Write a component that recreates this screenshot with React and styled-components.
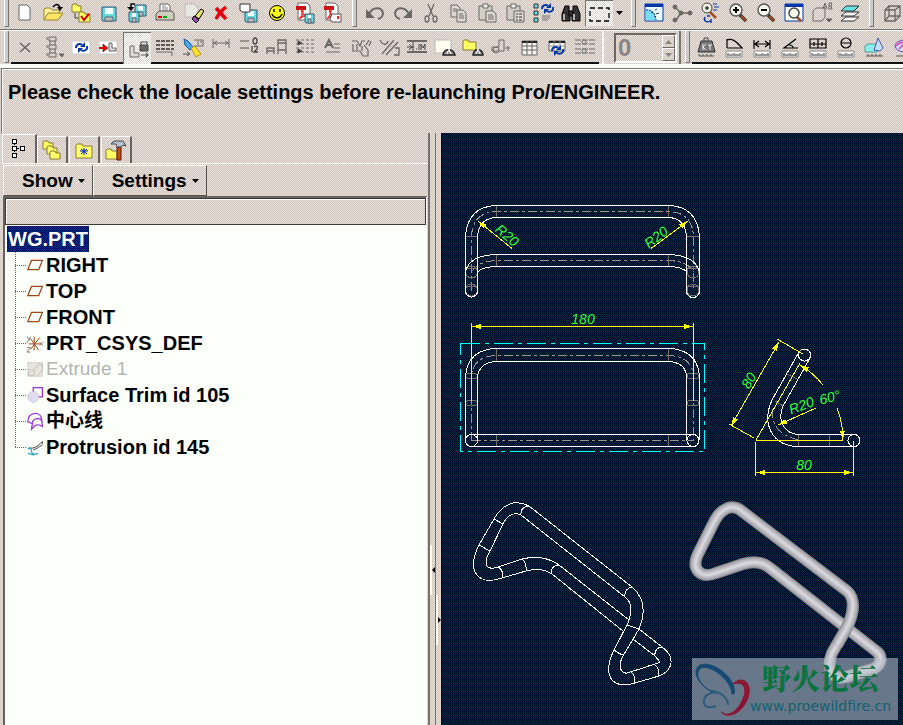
import React from "react";
import styled, { createGlobalStyle, css } from "styled-components";

const weave = css`
  background-color: #d3cdca;
  background-image: repeating-conic-gradient(rgba(150, 150, 155, 0.2) 0 25%, rgba(255, 248, 232, 0.42) 0 50%),
    repeating-conic-gradient(rgba(255, 255, 200, 0.2) 0 25%, rgba(240, 190, 205, 0.26) 0 50%);
  background-size: 2px 2px, 4px 4px;
`;

const lightWeave = css`
  background: repeating-conic-gradient(#ffffff 0 25%, #d8d8d0 0 50%) 0 0 / 2px 2px;
`;

const GlobalStyle = createGlobalStyle`
  * { box-sizing: border-box; }
  body { margin: 0; overflow: hidden; }
  button, input { font: inherit; color: inherit; padding: 0; border: 0; background: none; border-radius: 0; }
  svg { display: block; flex: none; }
`;

const Page = styled.div`
  ${weave}
  display: flex;
  flex-direction: column;
  min-height: 100vh;
  font: bold 19px/26px "Liberation Sans", "Noto Sans CJK SC", sans-serif;
  color: #000;
`;

const Bar = styled.div`
  display: flex;
  align-items: flex-start;
  overflow: hidden;
  height: ${(p) => (p.$tall ? 38 : 30)}px;
  border-bottom: ${(p) => (p.$tall ? "4px solid #fcfffa" : "1px solid #77736f")};
  border-top: ${(p) => (p.$tall ? "1px solid #fff" : 0)};
`;

const Grip = styled.span`
  flex: none;
  width: ${(p) => p.$width || 14}px;
  height: ${(p) => (p.$tall ? 31 : 26)}px;
  padding-left: ${(p) => (p.$width === 11 ? 4 : 5)}px;

  &::before {
    content: "";
    display: block;
    width: 3px;
    height: 100%;
    background: #ccc;
    border-left: 1px solid #fff;
    border-right: 1px solid #77736f;
    border-bottom: 1px solid #77736f;
  }
`;

const Strip = styled.div`
  display: flex;
  flex: none;
  height: ${(p) => (p.$tall ? 33 : 26)}px;
  padding-top: ${(p) => (p.$tall ? 1 : 0)}px;
  border-bottom: ${(p) => (p.$tall ? "2px solid #111" : 0)};
`;

const ToolButton = styled.button`
  display: flex;
  align-items: center;
  justify-content: center;
  flex: none;
  width: 28px;
  height: ${(p) => (p.$pressed && p.$tall ? 32 : p.$tall ? 30 : 26)}px;
  ${(p) =>
    p.$pressed &&
    css`
      ${lightWeave}
      border-left: 1px solid #77736f;
      border-top: 1px solid #77736f;
    `}
`;

const DropButton = styled.button`
  width: 13px;
  display: grid;
  place-items: center;
`;

const ValueGroup = styled.div`
  flex: none;
  width: 79px;
  height: 34px;
  margin-left: 3px;
  padding: 2px 4px 0 10px;
  display: flex;
  border-left: 2px solid #fff;
  border-right: 2px solid #77736f;
  border-bottom: 1px solid #77736f;
`;

const Spinner = styled.div`
  display: flex;
  width: 63px;
  height: 30px;
  border: 2px solid #6b6864;
  border-right-color: #fff;
  border-bottom-color: #fff;
`;

const ValueInput = styled.input`
  width: 48px;
  min-width: 0;
  padding-left: 2px;
  font-size: 24px;
  color: #888580;
`;

const Steps = styled.div`
  display: flex;
  flex-direction: column;
  width: 13px;
`;

const Step = styled.button`
  flex: 1;
  display: grid;
  place-items: center;
  fill: #888580;
  border-top: 1px solid #fff;
  border-left: 1px solid #fff;
  border-bottom: 1px solid #6b6864;
  border-right: 1px solid #6b6864;
`;

const Message = styled.p`
  flex: none;
  height: 65px;
  margin: 0 0 0 1px;
  padding: 10px 6px;
  border-top: 1px solid #77736f;
  border-left: 1px solid #77736f;
  box-shadow: inset 1px 1px #fff;
  font-size: 20px;
  white-space: nowrap;
`;

const Main = styled.main`
  flex: 1;
  display: flex;
`;

const Side = styled.aside`
  flex: none;
  width: 430px;
  display: flex;
  flex-direction: column;
  padding: 1px 0 0 2px;
  border-right: 2px solid #77736f;
`;

const Tabs = styled.div`
  display: flex;
  align-items: flex-end;
  height: 29px;
`;

const Tab = styled.button`
  width: ${(p) => (p.$active ? 35 : 31)}px;
  height: ${(p) => (p.$active ? 29 : 27)}px;
  margin-right: ${(p) => (p.$active ? 0 : 1)}px;
  display: grid;
  place-items: center;
  border-top: 1px solid #fff;
  border-left: 1px solid #fff;
  border-right: 2px solid #66625e;
`;

const Menus = styled.div`
  display: flex;
  height: 33px;
  border-top: 1px solid #fff;
  padding: 1px 0 0 1px;
`;

const MenuButton = styled.button`
  display: flex;
  align-items: center;
  gap: 5px;
  height: 31px;
  padding: 0 7px 0 18px;
  border: 1px solid #fff;
  border-right: 1px solid #55514d;
  border-bottom: 1px solid #55514d;
`;

const TreePanel = styled.div`
  flex: 1;
  margin: 0 1px;
  background: #fcfffa;
  border-top: 2px solid #66625e;
  border-left: 2px solid #66625e;
  border-right: 1px solid #fff;
  font-size: 20px;
`;

const ColumnHead = styled.div`
  ${weave}
  height: 27px;
  border: 1px solid #3d3a38;
  box-shadow: inset 1px 1px #fff;
`;

const Root = styled.button`
  display: block;
  margin: 1px 0 0 2px;
  padding: 0 1px;
  height: 26px;
  color: #fff;
  background: repeating-conic-gradient(#000066 0 25%, #003380 0 50%) 0 0 / 2px 2px;
`;

const Tree = styled.ul`
  list-style: none;
  margin: 0 0 0 10px;
  padding: 0;
`;

const Node = styled.li`
  display: flex;
  height: 26px;
  background: repeating-linear-gradient(#666 0 1px, transparent 1px 2px) 0 0 / 1px ${(p) => (p.$last ? "50%" : "100%")} no-repeat;

  &::before {
    content: "";
    width: 11px;
    height: 13px;
    border-bottom: 1px dotted #666;
  }
`;

const NodeButton = styled.button`
  display: flex;
  align-items: center;
  white-space: nowrap;
  color: ${(p) => (p.$dim ? "#b4b4b2" : "#000")};
  font-weight: ${(p) => (p.$dim ? "normal" : "bold")};
  font-size: ${(p) => (p.$dim || p.$cjk ? 19 : 20)}px;
`;

const Sash = styled.div`
  flex: none;
  width: 11px;
  display: flex;
`;

const Track = styled.div`
  flex: none;
  width: ${(p) => (p.$line ? 6 : 5)}px;
  padding-top: ${(p) => p.$top}px;
  border-right: ${(p) => (p.$line ? "1px solid #77736f" : 0)};
`;

const Handle = styled.button`
  display: grid;
  place-items: center;
  width: 5px;
  height: 50px;
  border-left: 2px solid #fffbe8;
`;

const Canvas = styled.section`
  flex: 1;
  min-width: 0;
  position: relative;
  background: repeating-conic-gradient(#000033 0 25%, #002c33 0 50%) 0 0 / 2px 2px;
`;

const Drawing = styled.svg`
  width: 100%;
  height: 100%;
  text {
    font: italic 14px "Liberation Sans", sans-serif;
    fill: #33ff33;
    text-anchor: middle;
  }
`;

const Watermark = styled.a`
  position: absolute;
  right: 5px;
  bottom: 5px;
  width: 206px;
  height: 62px;
  display: flex;
  background: rgba(190, 198, 208, 0.55);
  text-decoration: none;
`;

const MarkText = styled.span`
  display: flex;
  flex-direction: column;
`;

const MarkTitle = styled.span`
  padding: 2px 0 0 12px;
  font: 900 29px/36px "Noto Serif CJK SC", "Noto Sans CJK SC", serif;
  color: #0b7340;
`;

const MarkUrl = styled.span`
  font: 14px/20px "DejaVu Sans", sans-serif;
  color: #14626e;
`;

const folder = (x, y, w, h) => (
  <path d={`M${x} ${y + h}v-${h}l1-1h4l1 2h${w - 6}v${h - 1}z`} fill="#ffff66" stroke="#8a7a30" />
);
const disk = (x, y, s) => (
  <g>
    <path d={`M${x} ${y}h${s}v${s}h-${s - 1}l-1-1z`} fill="#66dddd" stroke="#357" />
    <path d={`M${x + 3} ${y + 1}h${s - 6}v${s / 2 - 1}h-${s - 6}z`} fill="#f4ffff" />
    <path d={`M${x + 3} ${y + s - 4}h${s - 6}v4h-${s - 6}z`} fill="#bbb" stroke="#567" />
  </g>
);
const page = (x, y, w, h, c = "#fff") => (
  <path d={`M${x} ${y}h${w - 3}l3 3v${h - 3}h-${w}z`} fill={c} stroke="#666" />
);
const ruler = (
  <g>
    <path d="M3 15h16v6H3z" fill="#fff" stroke="#888" />
    <path d="M5 17v3M7 18v2M9 18v2M11 17v3M13 18v2M15 18v2M17 17v3" stroke="#333" />
  </g>
);
const pdf = (
  <g>
    {page(4, 1, 12, 17)}
    <path d="M2 4h10v4H2z" fill="#c11" />
    <path d="M5 17c4-4 5-10 3-9s2 8 9 6c-5-1-9 0-12 3" fill="none" stroke="#e33" strokeWidth="1.5" />
  </g>
);
const lens = (s) => (
  <g>
    <path d="M13 13l6 6" stroke="#333" strokeWidth="3.5" />
    <path d="M14 14l5 5" stroke="#a54b20" strokeWidth="2" />
    <circle cx="9" cy="8" r="6" fill="#f6f6ee" stroke="#555" strokeWidth="1.4" />
    <path d={s} stroke="#000" strokeWidth="2" />
  </g>
);
const swirl = (x, y) => (
  <g transform={`translate(${x} ${y})`} fill="none" stroke="#0637a8" strokeWidth="2">
    <path d="M1 6c0-4 4-5 6-3M12 4c1 4-3 6-6 4" />
    <path d="M5 5h5V0zM8 6H3v5z" fill="#0637a8" stroke="none" />
  </g>
);

const G = "#6b6864";

const glyphs = {
  new: page(5, 3, 11, 15),
  open: (
    <g>
      <path d="M2 18V7l2-1h4l2 2h7v3" fill="#fff3a0" stroke="#9a8430" />
      <path d="M2 18l4-7h15l-5 7z" fill="#ffe566" stroke="#9a8430" />
      <path d="M11 5c3-4 6-3 7 1" fill="none" stroke="#000" strokeWidth="1.5" />
      <path d="M15 5h6l-3 4z" />
    </g>
  ),
  folders: (
    <g>
      {folder(2, 3, 9, 7)}
      <path d="M5 11v5h4" fill="none" stroke="#444" />
      {folder(9, 11, 11, 9)}
      <path d="M11 14l3 4 5-6" fill="none" stroke="#c00" strokeWidth="2" />
    </g>
  ),
  save: disk(4, 5, 14),
  saveAll: (
    <g>
      {disk(9, 3, 11)}
      {disk(3, 10, 10)}
      <path d="M9 2H5v5" fill="none" stroke="#000" strokeWidth="1.5" />
      <path d="M1 5h7l-3 4z" />
    </g>
  ),
  print: (
    <g>
      <path d="M6 10V2h8l2 2v6" fill="#fff" stroke="#666" />
      <path d="M8 4h4M8 6h6M8 8h6" stroke="#888" />
      <path d="M2 12l3-3h13l2 3v6H2z" fill="#cfccc0" stroke="#555" />
      <path d="M4 15h4" stroke="#c00" strokeWidth="2" />
      <path d="M9 15h4" stroke="#0a0" strokeWidth="2" />
    </g>
  ),
  erase: (
    <g>
      <path d="M3 2h9l4 4v9H3z" fill="#e8e8e2" stroke="#999" strokeDasharray="1 1" />
      <path d="M13 14l6-7 3 2-5 8z" fill="#e8e070" stroke="#000" />
      <path d="M12 14l5 4-3 3-4-4z" fill="#a050b0" stroke="#000" />
    </g>
  ),
  remove: <path d="M6 6l10 11M16 5c-5 4-8 8-10 12" stroke="#e8000c" strokeWidth="3.5" fill="none" />,
  saveCopy: (
    <g>
      {disk(7, 8, 12)}
      <path d="M2 2h10v8H4l-2-2z" fill="#fff" stroke="#333" />
    </g>
  ),
  smile: (
    <g>
      <circle cx="11" cy="11" r="7.5" fill="#ffff00" stroke="#000" />
      <path d="M8 7v3M14 7v3M6 12c2 5 8 5 10 0" fill="none" stroke="#000" strokeWidth="1.5" />
    </g>
  ),
  pdfSave: (<g>{pdf}{disk(11, 12, 9)}</g>),
  pdfMail: (
    <g>
      {pdf}
      <path d="M10 12h9v8h-9l-2-3z" fill="#fff" stroke="#555" />
      <path d="M15 14h2v3h-2z" fill="#e22" />
    </g>
  ),
  undo: (
    <g fill="none" stroke={G} strokeWidth="2">
      <path d="M5 12C9 4 18 5 19 11c0 4-2 5-5 6" />
      <path d="M2 7v9h9z" fill={G} stroke="none" />
    </g>
  ),
  redo: (
    <g fill="none" stroke={G} strokeWidth="2">
      <path d="M17 12C13 4 4 5 3 11c0 4 2 5 5 6" />
      <path d="M20 7v9h-9z" fill={G} stroke="none" />
    </g>
  ),
  cut: (
    <g fill="none" stroke={G} strokeWidth="1.3">
      <path d="M8 2l5 12M14 2L9 14" />
      <ellipse cx="7" cy="17" rx="2" ry="3" />
      <ellipse cx="15" cy="17" rx="2" ry="3" />
    </g>
  ),
  copy: (
    <g>
      {page(3, 3, 9, 12, "#ddd9d2")}
      {page(9, 8, 9, 12, "#ddd9d2")}
      <path d="M5 7h4M5 9h4M11 12h4M11 14h5M11 16h5" stroke={G} />
    </g>
  ),
  paste: (
    <g>
      <path d="M3 4h13v14H3z" fill="#d2cec6" stroke={G} />
      <path d="M7 2h5v4H7z" fill="#eee" stroke={G} />
      {page(10, 9, 10, 11, "#ddd9d2")}
      <path d="M12 13h5M12 15h6M12 17h6" stroke={G} />
    </g>
  ),
  pasteSpecial: (
    <g>
      <path d="M3 4h13v14H3z" fill="#d2cec6" stroke={G} />
      <path d="M7 2h5v4H7z" fill="#eee" stroke={G} />
      <path d="M10 9h10v11H10z" fill="#ddd9d2" stroke={G} />
      <path d="M12 12h2M15 12h3M12 15h2M15 15h3M12 18h2M15 18h3" stroke={G} strokeWidth="1.5" />
    </g>
  ),
  regen: (
    <g>
      <path d="M2 2h4v4H2zM2 9h4v4H2zM2 16h4v4H2z" fill="#66dddd" stroke="#333" />
      {swirl(9, 1)}
      <path d="M10 14h8M10 16h8M10 18h6" stroke="#777" />
    </g>
  ),
  find: (
    <g fill="#333" stroke="#000">
      <path d="M5 4h4v4l1 3v8H2v-7zM13 4h4l3 8v7h-8v-8l1-3z" />
      <path d="M9 9h4v5H9z" />
      <path d="M4 12v6M14 12v6" stroke="#ddd" strokeWidth="1.5" />
    </g>
  ),
  select: <path d="M1 5h19v13H1z" fill="none" stroke="#000" strokeWidth="1.3" strokeDasharray="5 3" />,
  repaint: (
    <g>
      <path d="M2 2h18v17H2z" fill="#eaffff" stroke="#0637a8" />
      <path d="M2 2h18v3H2z" fill="#0637a8" />
      <path d="M3 8c6-1 9 3 10 10H3z" fill="#77dcf4" />
      <path d="M8 10l2 1M12 8l2-1M13 12l3-1M11 14l2 1" stroke="#335" />
      <path d="M3 8c6-1 9 3 10 10" fill="none" stroke="#0637a8" strokeDasharray="2 1" />
    </g>
  ),
  orient: (
    <g stroke={G} fill={G}>
      <path d="M4 5l6 6h8M10 11l-5 7" strokeWidth="1.5" fill="none" />
      <circle cx="4" cy="5" r="2" />
      <circle cx="4" cy="18" r="2" />
      <circle cx="19" cy="11" r="2" />
      <circle cx="10" cy="11" r="2" />
    </g>
  ),
  spin: (
    <g>
      <path d="M11 10l6 6" stroke="#a54b20" strokeWidth="2.5" />
      <circle cx="8" cy="6" r="5" fill="#eed" stroke="#444" />
      <path d="M8 4v4M6 6h4" stroke="#000" />
      <path d="M14 2h4M15 5h5M14 8h4" stroke="#0637a8" />
      <path d="M6 15c-2 4 2 6 5 4M8 14h3M12 21v-4" stroke="#0637a8" strokeWidth="1.5" fill="none" />
    </g>
  ),
  zoomIn: lens("M6 8h6M9 5v6"),
  zoomOut: lens("M6 8h6"),
  refit: (
    <g>
      <path d="M2 2h18v17H2z" fill="#fff" stroke="#0637a8" />
      <path d="M2 2h18v3H2z" fill="#0637a8" />
      <path d="M14 15l4 4" stroke="#a54b20" strokeWidth="2.5" />
      <circle cx="11" cy="11" r="5" fill="#fffff0" stroke="#444" strokeWidth="1.5" />
    </g>
  ),
  saved: (
    <g fill="none" stroke={G}>
      <path d="M2 19V9l3-3h9v9l-3 4z" />
      <path d="M12 7l2-6 2 6M12 5h4M18 7V1h3l-1 3 1 3zM18 4h2" />
      <path d="M15 17h6l-3 3z" fill={G} />
    </g>
  ),
  layers: (
    <g fill="#fff" stroke="#333">
      <path d="M2 19l5-4h13l-5 4z" />
      <path d="M2 14l5-4h13l-5 4z" />
      <path d="M2 9l5-5h13l-5 5z" fill="#66e6e6" />
    </g>
  ),
  cube: (
    <g fill="none" stroke={G} strokeWidth="1.3">
      <path d="M4 8h10v11H4zM8 4h11v10H8zM4 8l4-4M14 8l5-4M4 19l4-5M14 19l5-5" />
    </g>
  ),
  close: <path d="M6 7l10 9M16 7L6 16" stroke={G} strokeWidth="1.6" />,
  queue: (
    <g fill="none" stroke={G}>
      <path d="M7 1h7v4H7zM7 9h7v4H7zM7 17h7v4H7zM5 1v3M5 9v3M5 17v3M8 5v4M13 5v4M8 13v4M13 13v4" />
      <path d="M17 18h5l-2 3z" fill={G} />
    </g>
  ),
  update: (
    <g>
      <path d="M2 5h18v13H2z" fill="#fff" stroke="#ccc" />
      {swirl(5, 6)}
    </g>
  ),
  insert: (
    <g>
      <path d="M1 5h18v13H1z" fill="#fff" stroke="#ccc" />
      <path d="M11 7v8h7v-3h-4V7z" fill="#ddd" stroke="#666" />
      <path d="M1 12h6" stroke="#d00" strokeWidth="2" />
      <path d="M5 8l5 4-5 4z" fill="#d00" stroke="#600" strokeWidth=".5" />
    </g>
  ),
  lock: (
    <g>
      <path d="M3 8v11h9v-4H7V8z" fill="#ddd" stroke={G} />
      <path d="M13 7h8v6h-8z" fill={G} stroke="#444" />
      <path d="M14 7V4h6v3M14 17h7M19 15l2 2-2 2" fill="none" stroke="#555" strokeWidth="1.2" />
    </g>
  ),
  dashes: (
    <g fill="none" stroke="#333" strokeDasharray="4 1">
      <path d="M2 5h18M2 9h18M2 13h18" strokeWidth="1.4" />
      <path d="M2 16h16v4" stroke={G} strokeDasharray="none" />
    </g>
  ),
  brush: (
    <g>
      <path d="M12 4h9v6h-9M15 6h2M18 6h2M15 8h2" fill="none" stroke={G} />
      <path d="M2 3l4 2 5 6-3 3-5-5z" fill="#4aa6ee" stroke="#135a9a" />
      <path d="M9 12l4-2 6 8-5 3z" fill="#ffe030" stroke="#b69210" />
      <path d="M1 18h6M5 16l3 2-3 2" stroke="#555" fill="none" />
    </g>
  ),
  width: (
    <g stroke={G} fill="none">
      <path d="M3 3v9M19 3v9M3 7h16M7 5L4 7l3 2M15 5l3 2-3 2" />
    </g>
  ),
  ordinate: (
    <g>
      <path d="M2 5h9M2 12h9" stroke="#555" />
      <ellipse cx="17" cy="5" rx="2" ry="3" fill="none" stroke="#444" strokeWidth="1.3" />
      <path d="M14 10v6M16 11c3-2 4 0 3 2l-3 3h4" fill="none" stroke="#444" strokeWidth="1.3" />
    </g>
  ),
  steps: (<path d="M1 18v-6h7v6M1 15h7M12 18V4h8v14M12 7h8M12 14h8" fill="none" stroke={G} strokeWidth="1.3" />),
  align: (
    <g stroke="#444" fill="#444">
      <path d="M2 4h18M2 8h18M2 12h18M2 16h18" stroke={G} strokeDasharray="3 2" />
      <path d="M4 5l4 2-4 2zM4 13l4 2-4 2z" />
    </g>
  ),
  text: (
    <g stroke={G} fill="none">
      <path d="M3 12l4-8 4 8M5 9h5" strokeWidth="2" />
      <path d="M12 8h6M12 12h6M4 16h14" />
    </g>
  ),
  wave: (<path d="M2 5h5l3 5 2-5h3M3 8v8M7 8v6M4 15h6l3 5h5v-6l-4-5M16 9l3-5M19 10l2-5M12 10v5" fill="none" stroke={G} strokeWidth="1.2" />),
  slope: (<path d="M2 4c3 6 7 5 8 1M4 18L16 4M8 19L20 6M16 19h5v-7h-4" fill="none" stroke={G} strokeWidth="1.3" />),
  scale: (
    <g stroke="#444" fill="none">
      <path d="M1 5h20M1 16h20" strokeWidth="1.4" />
      <path d="M3 8l3 3-3 3M7 6v9M1 11h7M10 13h1M13 8v6M15 14V8l2 4 2-4v6" />
    </g>
  ),
  note: (
    <g>
      <path d="M1 4h16v13H1z" fill="#fffff0" stroke="#bbb" />
      <path d="M9 19c1-7 10-7 12 0z" fill="#999" stroke="#222" strokeWidth="1.5" />
      <path d="M13 18l2-5 2 5" fill="none" stroke="#fff" />
    </g>
  ),
  folderNote: (
    <g>
      {folder(1, 5, 13, 9)}
      <path d="M11 19c1-7 9-7 10 0z" fill="#999" stroke="#222" strokeWidth="1.5" />
      <path d="M14 18l2-5 2 5" fill="none" stroke="#fff" />
    </g>
  ),
  attach: (
    <g stroke={G} fill="none">
      <path d="M9 4h5v11H2v-4h7z" />
      <circle cx="6" cy="14" r="3" />
      <path d="M15 12h5M18 10v5" />
    </g>
  ),
  table: (
    <g stroke="#666">
      <path d="M4 5h15v14H4z" fill="#f4f2ea" />
      <path d="M4 6h15" stroke="#222" strokeWidth="2" />
      <path d="M4 10h15M4 14h15M9 5v14M14 5v14" />
    </g>
  ),
  tableUpdate: (
    <g>
      <path d="M3 5h16v10H3z" fill="#f4f2ea" stroke="#666" />
      <path d="M3 6h16" stroke="#222" strokeWidth="2" />
      <path d="M3 10h16M8 5v10M14 5v10" stroke="#999" />
      {swirl(5, 9)}
    </g>
  ),
  sliders: (
    <g stroke={G} fill="#ddd">
      <path d="M1 4h20M1 8h20M1 13h20M1 17h20" strokeDasharray="6 1" />
      <circle cx="10" cy="6" r="2" />
      <circle cx="10" cy="15" r="2" />
    </g>
  ),
  mass: (
    <g>
      <path d="M6 5h11l3 11H3z" fill="#777" stroke="#333" />
      <path d="M9 5V2h4v3" fill="none" stroke="#444" />
      <path d="M8 8v6M11 8l-3 3 3 3M13 9h4M15 9v5" fill="none" stroke="#eee" />
      <path d="M4 20h15M4 18v2M8 18v2M12 18v2M16 18v2" stroke="#555" />
    </g>
  ),
  length: (<g>{ruler}<path d="M4 12V3M4 4c5-2 9 1 15 8H4" fill="none" stroke="#000" strokeWidth="1.2" /></g>),
  distance: (<g>{ruler}<path d="M3 4v9M19 4v9M4 8h14M8 5L4 8l4 3M14 5l4 3-4 3" fill="none" stroke="#000" strokeWidth="1.2" /></g>),
  angle: (<g>{ruler}<path d="M17 3L5 12h14M10 9c3 0 4 1 4 3" fill="none" stroke="#000" strokeWidth="1.2" /></g>),
  area: (<g>{ruler}<path d="M3 3h16v9H3zM3 8h16M11 3v9M7 6v4M15 6v4" fill="none" stroke="#000" strokeWidth="1.2" /></g>),
  diameter: (<g>{ruler}<circle cx="11" cy="7" r="5" fill="none" stroke="#000" strokeWidth="1.2" /><path d="M6 7h10" stroke="#000" /></g>),
  volume: (
    <g>
      <path d="M2 10l3-2h9v8H2z" fill="#8ee" stroke="#599" />
      <path d="M11 14l4-12 5 10-3 3z" fill="#bfe0f8" stroke="#55a" />
      <path d="M3 20h17M5 18v2M9 18v2M13 18v2M17 18v2" stroke="#555" />
    </g>
  ),
  analysis: (
    <g>
      <ellipse cx="14" cy="10" rx="10" ry="6" fill="#cdf" stroke="#74b" />
      <path d="M5 10c5-6 12-4 15 0M8 13l8-8" fill="none" stroke="#d4a" strokeWidth="1.5" />
      <path d="M5 20h15" stroke="#555" />
    </g>
  ),
  modelTree: (
    <path d="M4 1h4v4H4zM4 8h4v4H4zM4 15h4v4H4zM12 8h4v4h-4zM6 6v1M6 13v1M9 10h2" fill="#fff" stroke="#000" shapeRendering="crispEdges" />
  ),
  folderStack: (<g>{folder(2, 3, 10, 7)}{folder(6, 8, 10, 7)}{folder(9, 13, 10, 7)}</g>),
  favorites: (
    <g>
      <path d="M3 19V6l1-1h5l1 2h9v12z" fill="#ffff66" stroke="#8a7a30" />
      <path d="M11 9v7M7 12h8M8 10l6 5M14 10l-6 5" stroke="#0020d0" />
    </g>
  ),
  tools: (
    <g>
      {folder(1, 11, 11, 9)}
      <path d="M12 8h4v13h-4z" fill="#b8501c" stroke="#611" />
      <path d="M6 5l3-3h9l3 5-3-1-2 2h-4l-1-3z" fill="#b8c4cc" stroke="#445" />
    </g>
  ),
  plane: <path d="M6 6h12l-4 10H2z" fill="none" stroke="#9a4a1a" strokeWidth="1.4" />,
  csys: (
    <g fill="none">
      <path d="M1 4l3 4M5 4l-4 7M1 16h4l-4 5h4M15 10l4 4M19 10l-4 4" stroke="#777" />
      <path d="M9 4v15M3 12h14M5 18L15 5M5 6l9 13" stroke="#a04a18" strokeWidth="1.1" />
    </g>
  ),
  extrude: (
    <g fill="#e6e4dc" stroke="#c0beb8">
      <path d="M2 4h16v15H2z" strokeDasharray="2 1" />
      <path d="M3 12h6v6H3zM9 12l5-6h4v6l-5 6" fill="none" />
    </g>
  ),
  trim: (
    <g>
      <path d="M8 3h10v10H8z" fill="none" stroke="#93d" strokeWidth="1.4" />
      <circle cx="8" cy="13" r="6" fill="#e0dcec" stroke="#b8a8cc" strokeDasharray="1 1" />
    </g>
  ),
  surface: (
    <path d="M2 12C2 1 15 0 17 8l1 9c-3-2-6-2-8-1l-4 4 1-6-5-2zM7 14c0-6 9-8 11-2" fill="none" stroke="#93d" strokeWidth="1.4" />
  ),
  sweep: (
    <g fill="none">
      <path d="M3 12c6 1 9-1 15-7v3M8 14c3 0 5-3 10-5" stroke="#333" />
      <path d="M2 13c4-2 4 1 4 3s4 4 7 2M2 18l7 2" stroke="#3ab" strokeWidth="1.5" />
    </g>
  ),
};

const Icon = ({ name, size = 22 }) => (
  <svg width={size} height={size} viewBox="0 0 22 22" aria-hidden="true">{glyphs[name]}</svg>
);
const Caret = ({ up }) => (
  <svg width="7" height="4" viewBox="0 0 7 4" aria-hidden="true"><path d={up ? "M0 4h7L3.5 0z" : "M0 0h7L3.5 4z"} /></svg>
);

const Tools = ({ items, tall, pressed, children }) => (
  <Strip $tall={tall}>
    {items.map((n) => (
      <ToolButton key={n} type="button" aria-label={n} $tall={tall} $pressed={n === pressed}>
        <Icon name={n} />
      </ToolButton>
    ))}
    {children}
  </Strip>
);

const fileTools = ["new", "open", "folders", "save", "saveAll", "print", "erase", "remove", "saveCopy", "smile", "pdfSave", "pdfMail"];
const editTools = ["undo", "redo", "cut", "copy", "paste", "pasteSpecial", "regen", "find", "select"];
const viewTools = ["repaint", "orient", "spin", "zoomIn", "zoomOut", "refit", "saved", "layers"];
const drawTools = ["close", "queue", "update", "insert", "lock", "dashes", "brush", "width", "ordinate", "steps", "align", "text", "wave", "slope", "scale", "note", "folderNote", "attach", "table", "tableUpdate", "sliders"];
const measureTools = ["mass", "length", "distance", "angle", "area", "diameter", "volume", "analysis"];
const tabs = [["modelTree", "Model Tree"], ["folderStack", "Folders"], ["favorites", "Favorites"], ["tools", "Connections"]];
const nodes = [
  ["plane", "RIGHT"], ["plane", "TOP"], ["plane", "FRONT"], ["csys", "PRT_CSYS_DEF"], ["extrude", "Extrude 1"],
  ["trim", "Surface Trim id 105"], ["surface", "中心线"], ["sweep", "Protrusion id 145"],
];

const tubePath =
  "M743 512L847 591C855 598 855 612 846 629L832 653C827 665 830 681 846 677L873 669C882 665 883 656 876 651L770 568C762 561 753 561 743 564L716 573C700 579 691 569 698 554L713 524C721 507 733 503 743 512Z";
const tubeTones = [[12, "#85858b"], [10, "#a2a2a8"], [8, "#b4b4ba"], [5, "#c6c6cc"], [2, "#d8d8dc"]];

const Arrow = ({ x, y, a }) => <path transform={`translate(${x} ${y}) rotate(${a})`} d="M0 0l-9-2.5v5z" fill="#ff0" stroke="none" />;

const CadDrawing = () => (
  <Drawing viewBox="441 133 462 592" role="img" aria-label="Bent tube drawing views" fill="none" stroke="#fff" strokeWidth="1">
    <g shapeRendering="crispEdges">
      <g stroke="#98948e" strokeDasharray="9 3 3 3">
        <path d="M471.5 291V236Q473 212 497 211.5H668Q692 212 693.5 236V291" />
        <path d="M471.5 272Q478 261 497 260.5H668Q688 261 693.5 272" />
        <path d="M471.5 440.5V376Q473 356 497 355.5H668Q692 356 693.5 376V440.5M472 440.5H693" />
        <path d="M773 409Q770 434 799 440" />
      </g>
      <g stroke="#776f6a">
        <path d="M496.5 205v12M668.5 205v12M496.5 254v12M668.5 254v12M465 236.5h12M687 236.5h12M496.5 348v13M668.5 348v13M496.5 434v12M668.5 434v12" />
        <path d="M466 268.5h11M687 268.5h11M466 286.5h11M687 286.5h11M798.5 434v12M829.5 434v12M787 374l10 5M775 401l8 5" />
        <circle cx="471.5" cy="272" r="6" /><circle cx="693" cy="272" r="6" />
        <circle cx="471.5" cy="290" r="6" /><circle cx="693" cy="290" r="6" />
        {[376, 403].map((y) => (
          <g key={y}><ellipse cx="471.5" cy={y} rx="6" ry="3" /><ellipse cx="693" cy={y} rx="6" ry="3" /></g>
        ))}
      </g>
      <path d="M465.5 291V236Q468 206 497 205.5H668Q697 206 699.5 236V291a6.5 6.5 0 0 1-13 0V236Q685 218 668 217.5H497Q479 218 477.5 236V291a6 6 0 0 1-12 0" />
      <path d="M465.5 272Q469 255 497 254.5H668Q695 255 699.5 272M478 272Q481 267 497 266.5H668Q683 267 687 272" />
      <path d="M465.5 440V376Q468 349 497 348.5H668Q697 349 699.5 376V440M477.5 440V376Q480 362 497 361.5H668Q685 362 686.5 376V440M471 434.5H693M471 446.5H693" />
      <circle cx="471.5" cy="440.5" r="6" /><circle cx="693" cy="440.5" r="6" />
      <path d="M460.5 343.5H704.5V451.5H460.5z" stroke="#00ffff" strokeDasharray="19 5 4 5" />
      <path d="M799 352L772 400C761 425 773 446 798 446.5H854M810 358L783 406C776 423 787 434 798 434.5H854" />
      <circle cx="804.5" cy="355" r="6" /><circle cx="854" cy="440.5" r="6" />

      <g stroke="#ffff00">
        <path d="M471.5 323V401M693.5 323V401M472 326.5H693M478 221L512 248.5M688 221L651 248.5" />
        <path d="M777 339L803 354M729 424L754 438M779 342L731 426M756 440L800 363M756 440.5H843M755.5 442V476M853.5 441V476M756 472.5H853M778 425L816 408" />
        <path d="M799.5 364.5A87 87 0 0 1 823 385M837 408A87 87 0 0 1 843 440" />
      </g>
      <Arrow x={472} y={326.5} a={180} /><Arrow x={693} y={326.5} a={0} />
      <Arrow x={478} y={221} a={219} /><Arrow x={688} y={221} a={-37} />
      <Arrow x={779} y={342} a={-60} /><Arrow x={731} y={426} a={120} />
      <Arrow x={756} y={472.5} a={180} /><Arrow x={853} y={472.5} a={0} />
      <Arrow x={778} y={425} a={156} /><Arrow x={800} y={365} a={210} /><Arrow x={843} y={440} a={85} />

      <path d="M494 519L479 545C465 573 480 586 502 578L526 571C537 568 543 569 552 574L623 631M633 639L655 656M639 629L662 647C675 656 674 670 659 676L635 683C611 690 602 675 614 650L628 623C633 609 631 601 625 597L521 515C514 512 508 514 503 524" />
      <path d="M503 524L490 551C482 565 487 571 498 567L522 559C535 556 548 557 559 565L629 620M655 656L660 662C657 664 650 665 646 667L627 673C619 674 619 663 623 656L639 629C646 612 645 598 632 587L529 506C516 499 503 503 494 519" />
      <path d="M494 519l9 5M479 545l11 6M498 567q6 3 4 11M522 559q5 4 4 12M559 565q-9 1-7 9M529 506q-9 1-8 9M632 587q-8 2-7 10M627 625l12 4M614 650q5 4 9 5M635 683q0-9-4-11M659 676q0-8-4-11M662 647q-8 1-7 9" />
    </g>

    <g stroke="none">
      <text x="583" y="324">180</text>
      <text transform="translate(504 239) rotate(40)">R20</text>
      <text transform="translate(659 241) rotate(-38)">R20</text>
      <text transform="translate(753 383) rotate(-60)">80</text>
      <text transform="translate(803 410) rotate(-20)">R20</text>
      <text transform="translate(831 402) rotate(-15)">60°</text>
      <text x="804" y="470">80</text>
    </g>

    <g strokeLinejoin="round">
      {tubeTones.map(([w, c]) => <path key={w} d={tubePath} stroke={c} strokeWidth={w} />)}
      {tubeTones.map(([w, c]) => <path key={w} d="M853 604C853 611 851 620 846 629L837 645" stroke={c} strokeWidth={w} />)}
    </g>
  </Drawing>
);

const MarkLogo = () => (
  <svg width="58" height="62" viewBox="0 0 58 62" fill="none" aria-hidden="true">
    <path d="M42 36C46 22 22 2 8 7C-2 13 8 31 25 35C12 33 0 17 9 10C20 6 40 24 40 36z" fill="#174a72" stroke="#174a72" />
    <path d="M41 26C50 17 61 24 56 40C51 54 37 62 29 54C38 61 48 50 52 38C55 28 50 23 41 26z" fill="#8c1733" stroke="#8c1733" />
    <path d="M27 35C18 33 11 38 12 45C13 50 19 50 24 48M20 33C30 34 36 41 36 47" stroke="#2d5d7c" strokeWidth="2" />
  </svg>
);

export default function App() {
  return (
    <Page>
      <GlobalStyle />
      <Bar>
        <Grip $width={11} />
        <Tools items={fileTools} />
        <Grip />
        <Tools items={editTools} pressed="select">
          <DropButton type="button" aria-label="Selection options"><Caret /></DropButton>
        </Tools>
        <Grip />
        <Tools items={viewTools} />
        <Grip />
        <Tools items={["cube"]} />
      </Bar>
      <Bar $tall>
        <Grip $tall $width={11} />
        <Tools tall items={drawTools} pressed="lock" />
        <ValueGroup>
          <Spinner>
            <ValueInput aria-label="Value" defaultValue="0" />
            <Steps>
              <Step type="button" aria-label="Increase"><Caret up /></Step>
              <Step type="button" aria-label="Decrease"><Caret /></Step>
            </Steps>
          </Spinner>
        </ValueGroup>
        <Grip $tall $width={11} />
        <Tools tall items={measureTools} />
      </Bar>
      <Message>Please check the locale settings before re-launching Pro/ENGINEER.</Message>
      <Main>
        <Side>
          <Tabs role="tablist">
            {tabs.map(([icon, label], i) => (
              <Tab key={icon} type="button" role="tab" aria-label={label} aria-selected={i === 0} $active={i === 0}>
                <Icon name={icon} />
              </Tab>
            ))}
          </Tabs>
          <Menus>
            <MenuButton type="button">Show<Caret /></MenuButton>
            <MenuButton type="button">Settings<Caret /></MenuButton>
          </Menus>
          <TreePanel>
            <ColumnHead />
            <Root type="button">WG.PRT</Root>
            <Tree>
              {nodes.map(([icon, label], i) => (
                <Node key={label} $last={i === nodes.length - 1}>
                  <NodeButton type="button" $dim={icon === "extrude"} $cjk={icon === "surface"}>
                    <Icon name={icon} size={20} />
                    {label}
                  </NodeButton>
                </Node>
              ))}
            </Tree>
          </TreePanel>
        </Side>
        <Sash>
          <Track $top={412} $line>
            <Handle type="button" aria-label="Collapse left">
              <svg width="3" height="6" viewBox="0 0 3 6"><path d="M3 0v6L0 3z" /></svg>
            </Handle>
          </Track>
          <Track $top={462}>
            <Handle type="button" aria-label="Collapse right">
              <svg width="3" height="6" viewBox="0 0 3 6"><path d="M0 0v6l3-3z" /></svg>
            </Handle>
          </Track>
        </Sash>
        <Canvas>
          <CadDrawing />
          <Watermark href="#forum">
            <MarkLogo />
            <MarkText>
              <MarkTitle>野火论坛</MarkTitle>
              <MarkUrl>www.proewildfire.cn</MarkUrl>
            </MarkText>
          </Watermark>
        </Canvas>
      </Main>
    </Page>
  );
}
